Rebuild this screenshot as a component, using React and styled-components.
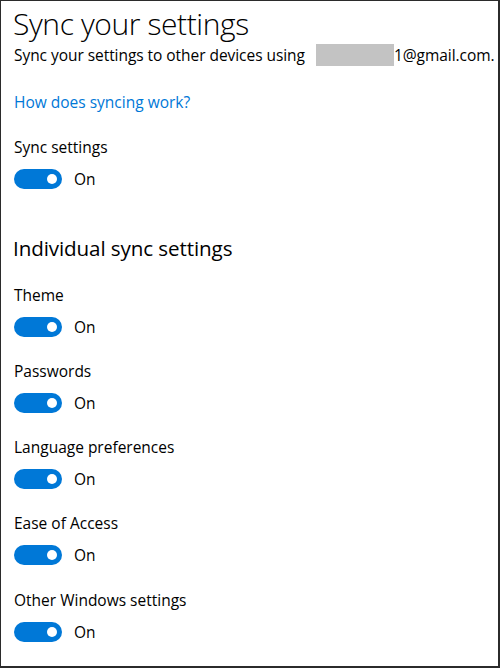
import React from "react";
import styled, { createGlobalStyle } from "styled-components";

const Global = createGlobalStyle`
  html, body { margin: 0; padding: 0; background: #fff; }
  * { box-sizing: border-box; }
`;

const Page = styled.div`
  width: 500px;
  height: 668px;
  border: 1px solid #2b2b2b;
  border-right-width: 2px;
  border-bottom-width: 2px;
  padding: 0 0 0 12px;
  font-family: "Open Sans", "Noto Sans", sans-serif;
  color: #000;
  display: flex;
  flex-direction: column;
  overflow: hidden;
`;

const Title = styled.h1`
  margin: 0;
  font-weight: 300;
  font-size: 30px;
  line-height: 40px;
  margin-top: 3px;
  letter-spacing: -0.4px;
`;

const Subtitle = styled.div`
  display: flex;
  align-items: center;
  font-size: 15.5px;
  line-height: 24px;
  margin-top: -1px;
  padding-left: 1px;
  letter-spacing: -0.05px;
`;

const Redacted = styled.span`
  display: inline-block;
  width: 78px;
  height: 22px;
  background: #c3c3c3;
  margin: 0 0 0 11px;
`;

const Link = styled.a`
  color: #0078d7;
  font-size: 15.5px;
  line-height: 24px;
  text-decoration: none;
  margin-top: 23px;
  padding-left: 1px;
`;

const Group = styled.div`
  display: flex;
  flex-direction: column;
  margin-top: ${(p) => p.$top}px;
  padding-left: 1px;
`;

const Label = styled.div`
  font-size: 15.5px;
  line-height: 22px;
`;

const ToggleRow = styled.div`
  display: flex;
  align-items: center;
  margin-top: 10px;
  height: 22px;
`;

const Track = styled.span`
  width: 48px;
  height: 20px;
  border-radius: 10px;
  background: #0078d7;
  position: relative;
  flex: none;
`;

const Knob = styled.span`
  position: absolute;
  right: 5px;
  top: 5px;
  width: 10px;
  height: 10px;
  border-radius: 50%;
  background: #fff;
`;

const State = styled.span`
  margin-left: 12px;
  font-size: 15.5px;
`;

const Section = styled.h2`
  margin: 0;
  margin-top: 44px;
  font-weight: 400;
  font-size: 20.6px;
  line-height: 28px;
  letter-spacing: -0.1px;
`;

const Toggle = () => (
  <ToggleRow>
    <Track>
      <Knob />
    </Track>
    <State>On</State>
  </ToggleRow>
);

const items = [
  "Theme",
  "Passwords",
  "Language preferences",
  "Ease of Access",
  "Other Windows settings",
];

export default function App() {
  return (
    <>
      <Global />
      <Page>
        <Title>Sync your settings</Title>
        <Subtitle>
          Sync your settings to other devices using
          <Redacted />
          1@gmail.com.
        </Subtitle>
        <Link href="#">How does syncing work?</Link>
        <Group $top={22}>
          <Label>Sync settings</Label>
          <Toggle />
        </Group>
        <Section>Individual sync settings</Section>
        {items.map((t, i) => (
          <Group key={t} $top={i === 4 ? 23 : 22}>
            <Label>{t}</Label>
            <Toggle />
          </Group>
        ))}
      </Page>
    </>
  );
}
